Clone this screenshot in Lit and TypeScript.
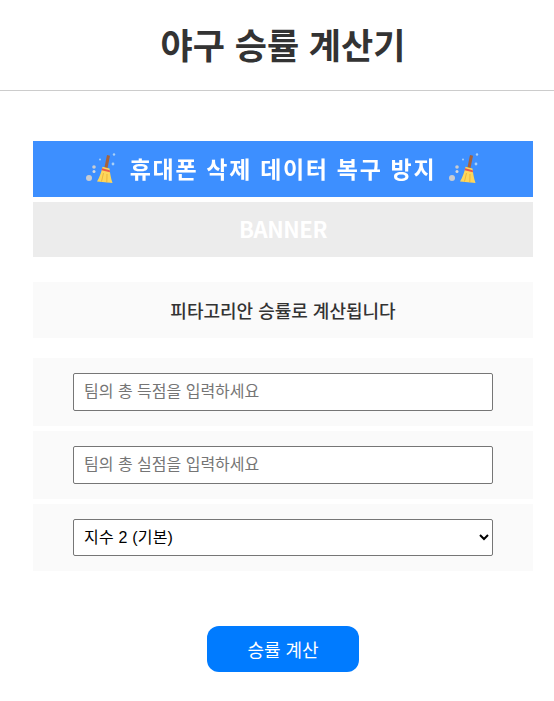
import { LitElement, html, css, svg } from 'lit';
import { customElement } from 'lit/decorators.js';

const broom = svg`
  <circle cx="5" cy="26" r="3" fill="#c9ccd1"/>
  <circle cx="10" cy="15" r="1.8" fill="#c9ccd1"/>
  <circle cx="10" cy="19.5" r="1.5" fill="#d6d9de"/>
  <circle cx="16" cy="7.5" r="1" fill="#a9d0f7"/>
  <circle cx="30" cy="2.5" r="1.2" fill="#a9d0f7"/>
  <circle cx="29" cy="12" r="1.4" fill="#a9d0f7"/>
  <path d="M23 3 L26 3.8 L23.4 16.5 L20.4 15.8 Z" fill="#a5623c"/>
  <path d="M18.5 14.8 L25.5 16.6 C26 21 26.8 26 28.5 31 L13 29.6 C15.5 25.5 17.5 20 18.5 14.8 Z" fill="#fdd65b"/>
  <path d="M18.2 16.2 L25.7 18.2 L26 20.2 L17.6 18.2 Z" fill="#e8564a"/>
  <path d="M19.5 21 L17.5 29.5 M23 22 L22.8 30.4" stroke="#e8ad34" stroke-width="0.8" fill="none"/>
`;

@customElement('app-root')
export class AppRoot extends LitElement {
  static styles = css`
    :host {
      display: block;
      overflow: hidden;
      background: #fff;
      font-family: 'Liberation Sans', 'Noto Sans CJK KR', sans-serif;
    }

    .page {
      width: 566px;
      height: 701px;
    }

    header {
      height: 90px;
      border-bottom: 1px solid #ccc;
      display: flex;
      align-items: center;
      justify-content: center;
    }

    h1 {
      margin: 2px 0 0;
      font-size: 35px;
      font-weight: 700;
      line-height: 1;
      color: #333;
    }

    main {
      width: 500px;
      margin: 50px auto 0;
    }

    .ad {
      height: 56px;
      background: #3d8fff;
      color: #fff;
      display: flex;
      align-items: center;
      justify-content: center;
      gap: 11px;
      font-size: 23px;
      font-weight: 700;
      letter-spacing: 1.7px;
    }

    .ad span {
      padding-bottom: 2px;
      filter: blur(0.3px);
    }

    .ad svg {
      width: 35px;
      height: 35px;
      filter: blur(0.3px);
    }

    .placeholder {
      height: 55px;
      margin-top: 5px;
      background: #ececec;
      color: #fff;
      display: flex;
      align-items: center;
      justify-content: center;
      font-family: 'Noto Sans CJK KR', sans-serif;
      font-size: 22px;
      font-weight: 700;
      letter-spacing: -0.4px;
      padding-bottom: 3px;
      box-sizing: border-box;
    }

    .note {
      height: 56px;
      margin-top: 25px;
      background: #fafafa;
      color: #333;
      font-size: 18px;
      font-weight: 500;
      display: flex;
      align-items: center;
      justify-content: center;
    }

    .fields {
      margin-top: 20px;
      display: flex;
      flex-direction: column;
      gap: 5px;
    }

    .field {
      padding: 15px 40px;
      background: #fafafa;
    }

    input,
    select {
      display: block;
      box-sizing: border-box;
      width: 100%;
      height: 38px;
      margin: 0;
      border: 1px solid #767676;
      border-radius: 2px;
      background: #fff;
      font: 16px 'Liberation Sans', 'Noto Sans CJK KR', sans-serif;
      color: #000;
    }

    input {
      padding: 0 10px;
    }

    input::placeholder {
      color: #757575;
      opacity: 1;
    }

    select {
      height: 37px;
      padding: 0 6px;
      letter-spacing: 0.2px;
    }

    .actions {
      margin-top: 55px;
      display: flex;
      justify-content: center;
    }

    button {
      width: 152px;
      height: 46px;
      border: none;
      border-radius: 12px;
      background: #007bff;
      color: #fff;
      font: 18px 'Liberation Sans', 'Noto Sans CJK KR', sans-serif;
    }
  `;

  render() {
    const icon = html`<svg viewBox="0 0 35 35" aria-hidden="true">${broom}</svg>`;
    return html`
      <div class="page">
        <header><h1>야구 승률 계산기</h1></header>
        <main>
          <div class="ad">${icon}<span>휴대폰 삭제 데이터 복구 방지</span>${icon}</div>
          <div class="placeholder">BANNER</div>
          <div class="note">피타고리안 승률로 계산됩니다</div>
          <div class="fields">
            <div class="field"><input type="text" placeholder="팀의 총 득점을 입력하세요" /></div>
            <div class="field"><input type="text" placeholder="팀의 총 실점을 입력하세요" /></div>
            <div class="field">
              <select>
                <option>지수 2 (기본)</option>
                <option>지수 1.83</option>
              </select>
            </div>
          </div>
          <div class="actions"><button type="button">승률 계산</button></div>
        </main>
      </div>
    `;
  }
}

declare global {
  interface HTMLElementTagNameMap {
    'app-root': AppRoot;
  }
}
